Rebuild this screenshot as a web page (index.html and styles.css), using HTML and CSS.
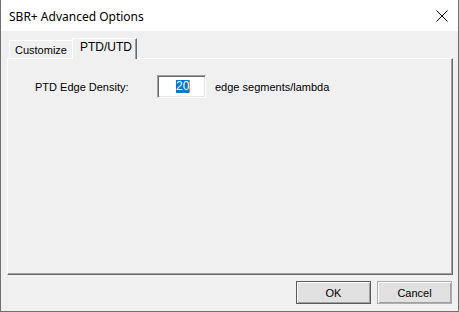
FILE: index.html
```html
<!DOCTYPE html>
<html lang="en">

<head>
    <meta charset="UTF-8" />
    <title>SBR+ Advanced Options</title>
    <link rel="stylesheet" href="styles.css">
</head>

<body>
    <div class="window">
        <div class="titlebar">
            <span class="title">SBR+ Advanced Options</span>
            <svg class="close" width="12" height="12" viewBox="0 0 12 12">
                <path d="M0.5 0.5 L11.5 11.5 M11.5 0.5 L0.5 11.5" stroke="#000" stroke-width="1" />
            </svg>
        </div>

        <div class="content">
            <div class="tabs">
                <div class="tab">Customize</div>
                <div class="tab active">PTD/UTD</div>
            </div>

            <div class="panel">
                <div class="field">
                    <label class="label">PTD Edge Density:</label>
                    <div class="input"><span class="sel">20</span><span class="caret"></span></div>
                    <span class="unit">edge segments/lambda</span>
                </div>
            </div>

            <div class="buttons">
                <button class="btn default">OK</button>
                <button class="btn">Cancel</button>
            </div>
        </div>
    </div>
</body>

</html>
```

FILE: styles.css
```css
:root {
    --cor-fundo: #f0f0f0;
    --cor-sombra: #a0a0a0;
    --cor-escura: #696969;
}

body {
    margin: 0;
    font-family: 'Liberation Sans', Arial, sans-serif;
    font-size: 11px;
    color: #000;
    background: #fff;
}

.window {
    box-sizing: border-box;
    width: 459px;
    height: 312px;
    border: 1px solid #707070;
    border-top: none;
    background-color: var(--cor-fundo);
}

.titlebar {
    height: 31px;
    background: #fff;
    display: flex;
    align-items: center;
    justify-content: space-between;
    padding: 0 10px 0 8px;
}

.title {
    font-family: 'Noto Sans', sans-serif;
    font-size: 12px;
    margin-top: 1px;
}

.close {
    margin-top: 1px;
}

.content {
    padding: 7px 5px 0 6px;
}

.tabs {
    display: flex;
    align-items: flex-end;
    height: 20px;
    padding-left: 2px;
    position: relative;
    z-index: 1;
}

.tab {
    box-sizing: border-box;
    height: 18px;
    padding: 2px 6px 0 5px;
    border-top: 1px solid #fff;
    border-left: 1px solid #fff;
    box-shadow: inset -1px 0 0 var(--cor-sombra);
    line-height: 15px;
}

.tab.active {
    height: 21px;
    width: 65px;
    padding: 1px 0 0 7px;
    margin-left: -1px;
    font-size: 12px;
    background-color: var(--cor-fundo);
    border-right: 1px solid var(--cor-escura);
    box-shadow: inset -1px 0 0 var(--cor-sombra);
    margin-bottom: -1px;
}

.panel {
    box-sizing: border-box;
    width: 446px;
    height: 217px;
    border-top: 1px solid #fff;
    border-left: 1px solid #fff;
    border-right: 1px solid var(--cor-escura);
    border-bottom: 1px solid var(--cor-escura);
    box-shadow: inset -1px -1px 0 var(--cor-sombra);
    padding: 16px 0 0 27px;
}

.field {
    display: flex;
    align-items: center;
}

.label {
    width: 122px;
}

.input {
    box-sizing: border-box;
    width: 49px;
    height: 23px;
    background: #fff;
    border-top: 1px solid var(--cor-sombra);
    border-left: 1px solid var(--cor-sombra);
    border-right: 1px solid #fff;
    border-bottom: 1px solid #fff;
    box-shadow: inset 1px 1px 0 var(--cor-escura), inset -1px -1px 0 #e3e3e3;
    display: flex;
    align-items: center;
    padding-left: 18px;
}

.sel {
    background: #0078d7;
    color: #fff;
    font-size: 12px;
    line-height: 13px;
}

.caret {
    width: 1px;
    height: 13px;
    background: #ff8c00;
}

.unit {
    margin-left: 9px;
}

.buttons {
    display: flex;
    justify-content: flex-end;
    gap: 6px;
    padding-top: 6px;
    padding-right: 1px;
}

.btn {
    box-sizing: border-box;
    width: 75px;
    height: 23px;
    font-family: 'Liberation Sans', Arial, sans-serif;
    font-size: 11px;
    background: #e1e1e1;
    border: 1px solid #adadad;
    padding: 0;
    box-shadow: inset 1px 1px 0 #fff, inset -1px -1px 0 var(--cor-sombra);
}

.btn.default {
    border: 1px solid #5a5a5a;
}
```
